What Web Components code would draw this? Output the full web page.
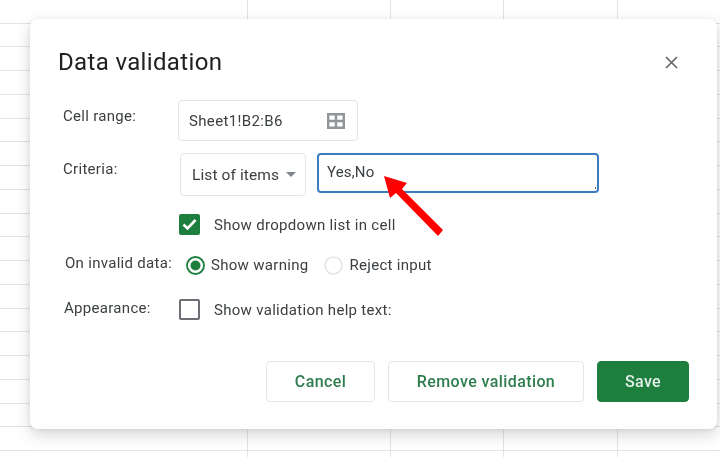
<!DOCTYPE html>
<html>
<head>
<meta charset="utf-8">
<style>
  html, body { margin: 0; padding: 0; height: 100%; overflow: hidden; }
  body { font-family: Roboto, "Liberation Sans", sans-serif; }
</style>
</head>
<body>

<sheet-grid>
  <dv-dialog heading="Data validation">
    <dv-row label="Cell range:" height="41" gap="12" label-left="33" label-top="7" field-left="148">
      <dv-range value="Sheet1!B2:B6"></dv-range>
    </dv-row>
    <dv-row label="Criteria:" height="43" gap="17" label-left="33" label-top="7" field-left="150">
      <dv-select value="List of items"></dv-select>
      <dv-list-input value="Yes,No"></dv-list-input>
    </dv-row>
    <dv-row height="22" gap="19" field-left="149">
      <dv-check checked>Show dropdown list in cell</dv-check>
    </dv-row>
    <dv-row label="On invalid data:" height="22" gap="22" label-left="35" label-top="0" field-left="156">
      <dv-radio checked>Show warning</dv-radio>
      <dv-radio>Reject input</dv-radio>
    </dv-row>
    <dv-row label="Appearance:" height="22" gap="0" label-left="34" label-top="1" field-left="149">
      <dv-check>Show validation help text:</dv-check>
    </dv-row>
    <dv-actions>
      <dv-button width="109">Cancel</dv-button>
      <dv-button width="196">Remove validation</dv-button>
      <dv-button width="92" primary>Save</dv-button>
    </dv-actions>
    <dv-arrow></dv-arrow>
  </dv-dialog>
</sheet-grid>

<script>
class SheetGrid extends HTMLElement{
    connectedCallback(){
        const shadow = this.attachShadow({mode:'open'});
        shadow.innerHTML = `<style>
            :host {
                display: block;
                position: relative;
                width: 720px;
                height: 457px;
                overflow: hidden;
                filter: blur(.35px);
                background-color: #fff;
                background-image:
                    linear-gradient(#e2e3e3, #e2e3e3),
                    linear-gradient(#e2e3e3, #e2e3e3),
                    linear-gradient(#e2e3e3, #e2e3e3),
                    linear-gradient(#e2e3e3, #e2e3e3),
                    repeating-linear-gradient(to bottom, transparent 0, transparent 22.75px, #e2e3e3 22.75px, #e2e3e3 23.75px);
                background-size: 1px 100%, 1px 100%, 1px 100%, 1px 100%, 100% 100%;
                background-position: 247px 0, 390px 0, 503px 0, 617px 0, 0 0;
                background-repeat: no-repeat;
            }
        </style><slot></slot>`;
    }
}

class DvDialog extends HTMLElement{
    connectedCallback(){
        const shadow = this.attachShadow({mode:'open'});
        shadow.innerHTML = `<style>
            :host {
                display: block;
                position: absolute;
                left: 30px;
                top: 19px;
                width: 687px;
                height: 410px;
                background: #fff;
                border-radius: 8px;
                box-shadow: 0 6px 16px rgba(60,64,67,.2), 0 1px 4px rgba(60,64,67,.1);
                color: #3c4043;
            }
            header {
                display: flex;
                justify-content: space-between;
                align-items: center;
                padding: 27px 39px 0 28px;
                height: 32px;
            }
            h1 {
                margin: 0;
                font: 400 24px/32px Roboto, sans-serif;
                letter-spacing: .35px;
                color: #202124;
            }
            svg { display: block; }
            main { padding-top: 22px; display: flex; flex-direction: column; }
        </style>
        <header>
            <h1></h1>
            <svg width="13" height="13" viewBox="0 0 13 13"><path d="M1 1l11 11M12 1L1 12" stroke="#5f6368" stroke-width="1.6" fill="none"/></svg>
        </header>
        <main><slot></slot></main>`;
        shadow.querySelector('h1').textContent = this.getAttribute('heading');
    }
}

class DvRow extends HTMLElement{
    connectedCallback(){
        const shadow = this.attachShadow({mode:'open'});
        const a = n => this.getAttribute(n);
        shadow.innerHTML = `<style>
            :host {
                display: block;
                position: relative;
                height: ${a('height')}px;
                margin-bottom: ${a('gap')}px;
            }
            .label {
                position: absolute;
                left: ${a('label-left') || 33}px;
                top: ${a('label-top') || 0}px;
                font-size: 15px;
                line-height: 18px;
                letter-spacing: .3px;
            }
            .fields {
                display: flex;
                padding-left: ${a('field-left')}px;
                height: 100%;
            }
        </style>
        <div class="label"></div>
        <div class="fields"><slot></slot></div>`;
        shadow.querySelector('.label').textContent = a('label') || '';
    }
}

class DvRange extends HTMLElement{
    connectedCallback(){
        const shadow = this.attachShadow({mode:'open'});
        shadow.innerHTML = `<style>
            :host {
                display: flex;
                align-items: center;
                justify-content: space-between;
                box-sizing: border-box;
                width: 180px;
                height: 41px;
                padding: 0 12px 0 10px;
                border: 1px solid #e4e6e8;
                border-radius: 4px;
                font-size: 15px;
                letter-spacing: .35px;
            }
        </style>
        <span></span>
        <svg width="18" height="16" viewBox="0 0 18 16"><path d="M1.2 1.2h15.6v13.6H1.2zM9 1v14M1 8h16" fill="none" stroke="#90959a" stroke-width="2.4"/></svg>`;
        shadow.querySelector('span').textContent = this.getAttribute('value');
    }
}

class DvSelect extends HTMLElement{
    connectedCallback(){
        const shadow = this.attachShadow({mode:'open'});
        shadow.innerHTML = `<style>
            :host {
                display: flex;
                align-items: center;
                justify-content: space-between;
                box-sizing: border-box;
                width: 126px;
                height: 43px;
                margin-right: 11px;
                padding: 0 9px 0 11px;
                border: 1px solid #e4e6e8;
                border-radius: 4px;
                font-size: 15.5px;
                letter-spacing: .1px;
            }
            i { width: 0; height: 0; border: 5px solid transparent; border-top-color: #80868b; border-bottom: 0; }
        </style>
        <span></span><i></i>`;
        shadow.querySelector('span').textContent = this.getAttribute('value');
    }
}

class DvListInput extends HTMLElement{
    connectedCallback(){
        const shadow = this.attachShadow({mode:'open'});
        shadow.innerHTML = `<style>
            :host {
                display: block;
                position: relative;
                box-sizing: border-box;
                width: 282px;
                height: 40px;
                padding: 7px 8px;
                border: 2px solid #3d7cc0;
                border-radius: 4px;
                font-size: 15px;
                line-height: 20px;
                letter-spacing: .15px;
            }
            i { position: absolute; right: 1px; bottom: 2px; width: 1px; height: 2px; background: #5f6368; }
        </style>
        <span></span><i></i>`;
        shadow.querySelector('span').textContent = this.getAttribute('value');
    }
}

class DvCheck extends HTMLElement{
    connectedCallback(){
        const shadow = this.attachShadow({mode:'open'});
        const on = this.hasAttribute('checked');
        shadow.innerHTML = `<style>
            :host {
                display: flex;
                align-items: center;
                font-size: 15px;
                letter-spacing: .3px;
            }
            .box {
                box-sizing: border-box;
                width: 21px;
                height: 21px;
                margin-right: 14px;
                border-radius: 2px;
                border: 2px solid ${on ? '#1e7e3e' : '#6b6f73'};
                background: ${on ? '#1e7e3e' : '#fff'};
            }
            svg { display: block; }
            span { padding-top: 1px; }
        </style>
        <div class="box">${on ? '<svg width="17" height="17" viewBox="0 0 17 17"><path d="M2.5 8.5l4 4 8-8.5" fill="none" stroke="#fff" stroke-width="2.6"/></svg>' : ''}</div>
        <span><slot></slot></span>`;
    }
}

class DvRadio extends HTMLElement{
    connectedCallback(){
        const shadow = this.attachShadow({mode:'open'});
        const on = this.hasAttribute('checked');
        shadow.innerHTML = `<style>
            :host {
                display: flex;
                align-items: center;
                margin-right: 16px;
                font-size: 15px;
                letter-spacing: .3px;
            }
            svg { display: block; margin-right: 6px; }
        </style>
        <svg width="19" height="19" viewBox="0 0 19 19">
            <circle cx="9.5" cy="9.5" r="8.5" fill="none" stroke="${on ? '#1e7e3e' : '#dadce0'}" stroke-width="${on ? 1.8 : 1.2}"/>
            ${on ? '<circle cx="9.5" cy="9.5" r="5" fill="#1e7e3e"/>' : ''}
        </svg>
        <span><slot></slot></span>`;
    }
}

class DvActions extends HTMLElement{
    connectedCallback(){
        const shadow = this.attachShadow({mode:'open'});
        shadow.innerHTML = `<style>
            :host {
                display: flex;
                justify-content: flex-end;
                gap: 13px;
                padding-right: 28px;
                margin-top: 41px;
            }
        </style><slot></slot>`;
    }
}

class DvButton extends HTMLElement{
    connectedCallback(){
        const shadow = this.attachShadow({mode:'open'});
        const primary = this.hasAttribute('primary');
        shadow.innerHTML = `<style>
            :host {
                display: flex;
                align-items: center;
                justify-content: center;
                box-sizing: border-box;
                width: ${this.getAttribute('width')}px;
                height: 41px;
                border-radius: 4px;
                border: 1px solid ${primary ? '#1e7e3e' : '#e4e6e8'};
                background: ${primary ? '#1e7e3e' : '#fff'};
                color: ${primary ? '#e3f0e7' : '#2f7d4f'};
                font-size: 16px;
                font-weight: 500;
                letter-spacing: .4px;
            }
        </style><slot></slot>`;
    }
}

class DvArrow extends HTMLElement{
    connectedCallback(){
        const shadow = this.attachShadow({mode:'open'});
        shadow.innerHTML = `<style>
            :host { display: block; position: absolute; left: 354px; top: 156px; width: 62px; height: 64px; }
        </style>
        <svg width="62" height="64" viewBox="0 0 62 64"><path d="M0 1L23 8 18 14 59 55 54 61 12 18 6 23z" fill="#fe0000"/></svg>`;
    }
}

customElements.define('sheet-grid', SheetGrid);
customElements.define('dv-dialog', DvDialog);
customElements.define('dv-row', DvRow);
customElements.define('dv-range', DvRange);
customElements.define('dv-select', DvSelect);
customElements.define('dv-list-input', DvListInput);
customElements.define('dv-check', DvCheck);
customElements.define('dv-radio', DvRadio);
customElements.define('dv-actions', DvActions);
customElements.define('dv-button', DvButton);
customElements.define('dv-arrow', DvArrow);
</script>
</body>
</html>
